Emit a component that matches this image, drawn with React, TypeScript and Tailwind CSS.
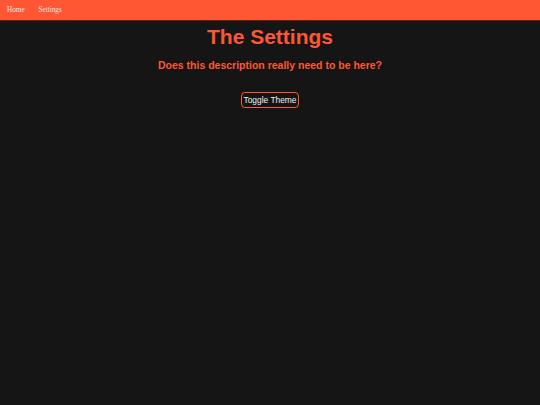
import React from "react";

export default function App() {
  return (
    <div className="min-h-[405px] w-full bg-[#151515]" style={{ fontFamily: '"Liberation Sans", Arial, sans-serif' }}>
      <nav className="flex h-[19px] items-center gap-[14px] bg-[#ff5733] px-[7px] pt-[1px] border-b border-[#5a2414] box-content">
        <a className="text-[7.2px] text-[#f3e6e2]" style={{ fontFamily: '"Liberation Serif", "Times New Roman", serif' }}>Home</a>
        <a className="text-[7.2px] text-[#f3e6e2]" style={{ fontFamily: '"Liberation Serif", "Times New Roman", serif' }}>Settings</a>
      </nav>
      <div className="flex flex-col items-center">
        <h1 className="mt-[3px] text-[21px] font-bold leading-[26px] text-[#ff5733]">The Settings</h1>
        <p className="mt-[9px] text-[10.5px] font-bold leading-[13px] text-[#ff5733]">Does this description really need to be here?</p>
        <button className="mt-[20px] h-[16px] rounded-[4px] border border-[#ff5733] bg-[#151515] px-[2px] text-[8.4px] leading-none text-[#f2f2f2]">
          Toggle Theme
        </button>
      </div>
    </div>
  );
}
